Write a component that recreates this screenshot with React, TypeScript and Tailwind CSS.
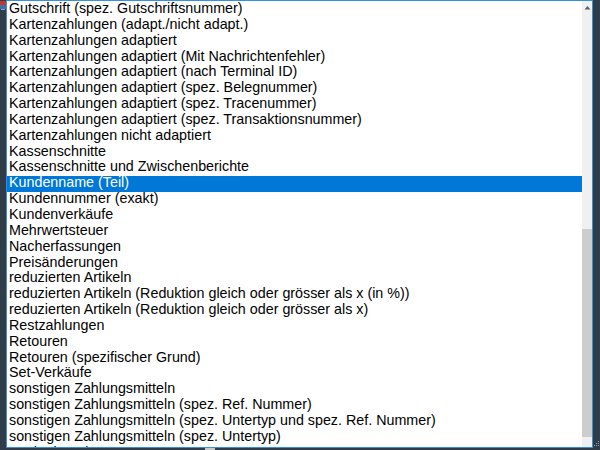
import React from "react";

const items = [
  "Gutschrift (spez. Gutschriftsnummer)",
  "Kartenzahlungen (adapt./nicht adapt.)",
  "Kartenzahlungen adaptiert",
  "Kartenzahlungen adaptiert (Mit Nachrichtenfehler)",
  "Kartenzahlungen adaptiert (nach Terminal ID)",
  "Kartenzahlungen adaptiert (spez. Belegnummer)",
  "Kartenzahlungen adaptiert (spez. Tracenummer)",
  "Kartenzahlungen adaptiert (spez. Transaktionsnummer)",
  "Kartenzahlungen nicht adaptiert",
  "Kassenschnitte",
  "Kassenschnitte und Zwischenberichte",
  "Kundenname (Teil)",
  "Kundennummer (exakt)",
  "Kundenverkäufe",
  "Mehrwertsteuer",
  "Nacherfassungen",
  "Preisänderungen",
  "reduzierten Artikeln",
  "reduzierten Artikeln (Reduktion gleich oder grösser als x (in %))",
  "reduzierten Artikeln (Reduktion gleich oder grösser als x)",
  "Restzahlungen",
  "Retouren",
  "Retouren (spezifischer Grund)",
  "Set-Verkäufe",
  "sonstigen Zahlungsmitteln",
  "sonstigen Zahlungsmitteln (spez. Ref. Nummer)",
  "sonstigen Zahlungsmitteln (spez. Untertyp und spez. Ref. Nummer)",
  "sonstigen Zahlungsmitteln (spez. Untertyp)",
  "Suche in Zeitraum",
];

export default function App() {
  return (
    <div
      className="w-[600px] h-[450px] bg-[#2e3d48] flex flex-col overflow-hidden"
      style={{ fontFamily: '"Liberation Sans", Arial, sans-serif' }}
    >
      <div className="flex h-[447px]">
        <div className="w-[6px] flex flex-col">
          <svg width="6" height="10" viewBox="0 0 6 10" className="mt-[1px]">
            <rect x="0" y="0" width="6" height="4" fill="#c0392b" />
            <rect x="0" y="4" width="6" height="4" fill="#3a6fb0" />
            <rect x="1" y="8" width="4" height="1" fill="#9aa6b0" />
          </svg>
        </div>
        <div className="w-[587px] flex border-l border-t border-r border-[#3a8ee0] bg-white">
          <div className="flex-1 overflow-hidden pt-[1px]">
            {items.map((t, i) => (
              <div
                key={i}
                className={
                  "h-[15.85px] leading-[15.85px] text-[14.3px] pl-[2px] whitespace-nowrap " +
                  (i === 11 ? "bg-[#0078d7] text-white" : "text-black")
                }
              >
                <span className="relative top-[-1px]">{t}</span>
              </div>
            ))}
          </div>
          <div className="w-[10px] bg-[#f0f0f0] flex flex-col">
            <div className="h-[12px] flex items-center justify-center">
              <svg width="7" height="5" viewBox="0 0 7 5">
                <path d="M0.5 4.5 L3.5 1 L6.5 4.5 Z" fill="#606060" />
              </svg>
            </div>
            <div className="h-[216px]" />
            <div className="h-[208px] bg-[#cdcdcd]" />
            <div className="flex-1" />
          </div>
        </div>
        <div className="flex-1 flex flex-col justify-end">
          <svg width="7" height="7" viewBox="0 0 7 7">
            <rect x="5" y="1" width="1" height="1" fill="#8a9aa6" />
            <rect x="3" y="3" width="1" height="1" fill="#8a9aa6" />
            <rect x="5" y="3" width="1" height="1" fill="#8a9aa6" />
            <rect x="1" y="5" width="1" height="1" fill="#8a9aa6" />
            <rect x="3" y="5" width="1" height="1" fill="#8a9aa6" />
            <rect x="5" y="5" width="1" height="1" fill="#8a9aa6" />
          </svg>
        </div>
      </div>
      <div className="h-[1px] ml-[6px] w-[587px] bg-[#3a8ee0]" />
      <div className="flex-1 flex">
        <div className="w-[205px]" />
        <div className="w-[10px] bg-[#c8c8c8]" />
      </div>
    </div>
  );
}
